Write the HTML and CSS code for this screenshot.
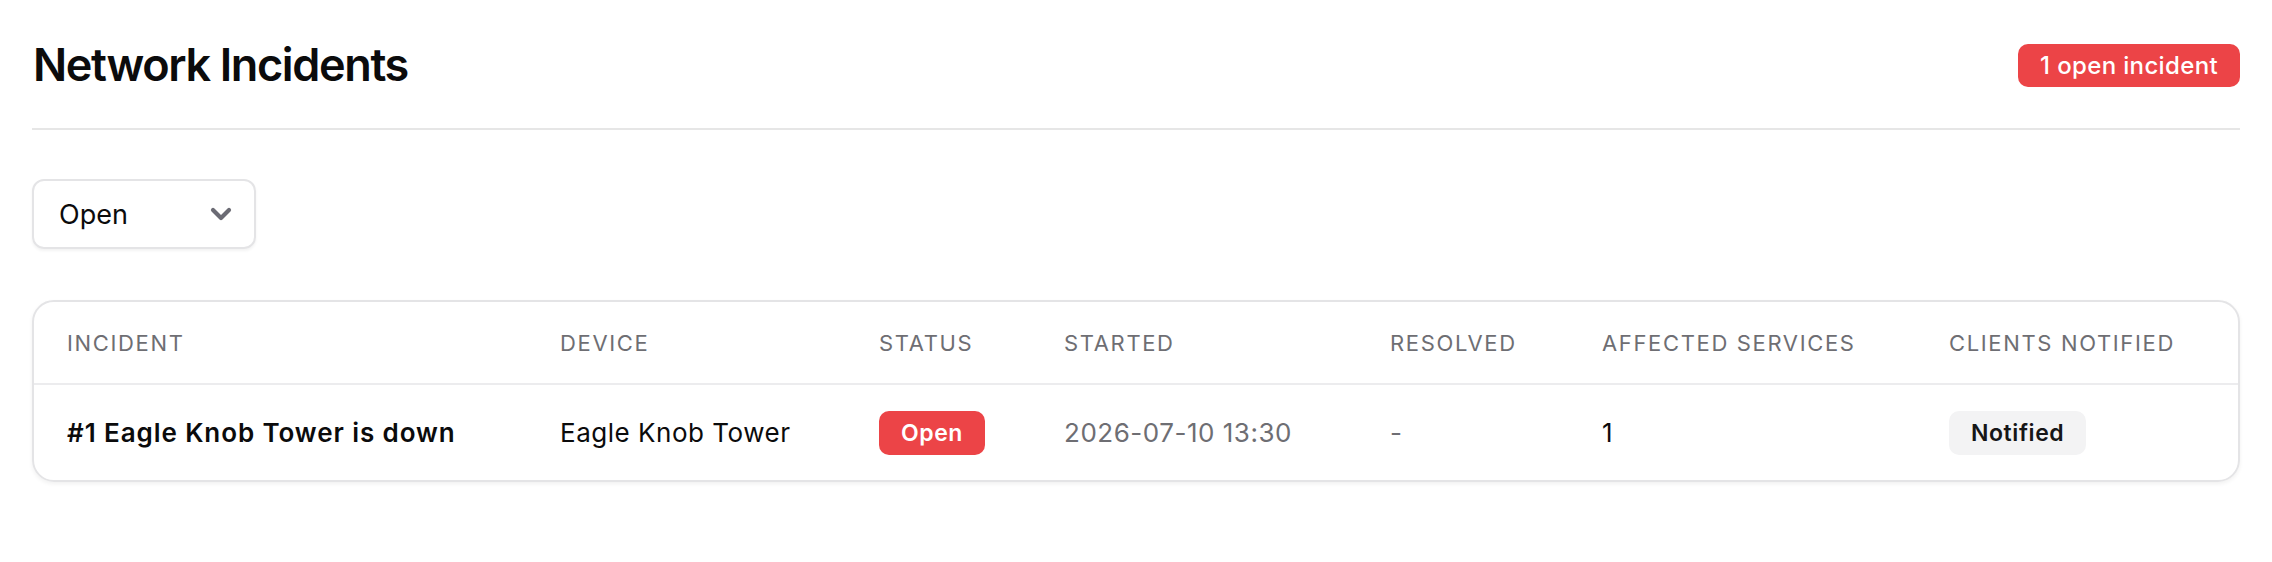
FILE: index.html
```html
<!DOCTYPE html>
<html lang="en">
<head>
    <meta charset="UTF-8">
    <meta name="viewport" content="width=device-width, initial-scale=1.0">
    <title>Network Incidents</title>
    <link rel="stylesheet" href="styles.css">
</head>
<body>
    <div class="page">
        <!-- Cabeçalho -->
        <header class="top">
            <h1>Network Incidents</h1>
            <span class="count">1 open incident</span>
        </header>

        <!-- Filtro -->
        <div class="filter">
            <span>Open</span>
            <svg class="chevron" width="22" height="14" viewBox="0 0 22 14">
                <path d="M3 3 L11 11 L19 3" fill="none" stroke="#6b6b74" stroke-width="4.2" stroke-linecap="round" stroke-linejoin="round"/>
            </svg>
        </div>

        <!-- Tabela -->
        <div class="card">
            <table>
                <thead>
                    <tr>
                        <th class="c-incident">Incident</th>
                        <th class="c-device">Device</th>
                        <th class="c-status">Status</th>
                        <th class="c-started">Started</th>
                        <th class="c-resolved">Resolved</th>
                        <th class="c-services">Affected Services</th>
                        <th class="c-clients">Clients Notified</th>
                    </tr>
                </thead>
                <tbody>
                    <tr>
                        <td class="name">#1 Eagle Knob Tower is down</td>
                        <td>Eagle Knob Tower</td>
                        <td><span class="pill pill-open">Open</span></td>
                        <td class="muted">2026-07-10 13:30</td>
                        <td class="muted">-</td>
                        <td>1</td>
                        <td><span class="pill pill-grey">Notified</span></td>
                    </tr>
                </tbody>
            </table>
        </div>
    </div>
</body>
</html>
```

FILE: styles.css
```css
body {
    margin: 0;
    font-family: Inter, "Noto Sans", sans-serif;
    background-color: #ffffff;
    color: #0b0b0c;
}
.page {
    padding: 36px 32px 32px;
}
.top {
    display: flex;
    justify-content: space-between;
    align-items: center;
    padding-bottom: 34px;
    border-bottom: 2px solid #e6e6e6;
}
h1 {
    margin: 0 0 0 1px;
    font-size: 45px;
    line-height: 58px;
    font-weight: 600;
    letter-spacing: -0.03em;
}
.count {
    background-color: #ec4447;
    color: #fff;
    font-size: 24px;
    font-weight: 500;
    letter-spacing: 0.015em;
    height: 43px;
    line-height: 43px;
    padding: 0 22px;
    border-radius: 10px;
}

/* Filtro */
.filter {
    margin-top: 49px;
    width: 224px;
    height: 70px;
    box-sizing: border-box;
    display: flex;
    align-items: center;
    justify-content: space-between;
    padding: 0 22px 0 25px;
    border: 2px solid #e4e4e6;
    border-radius: 12px;
    box-shadow: 0 2px 3px rgba(0, 0, 0, 0.05);
    font-size: 27px;
}

/* Tabela */
.card {
    margin-top: 51px;
    border: 2px solid #e4e4e6;
    border-radius: 22px;
    box-shadow: 0 2px 4px rgba(0, 0, 0, 0.06);
    overflow: hidden;
}
table {
    width: 100%;
    border-collapse: collapse;
    table-layout: fixed;
}
th {
    height: 81px;
    padding: 0 33px;
    text-align: left;
    font-size: 22px;
    font-weight: 400;
    letter-spacing: 0.075em;
    text-transform: uppercase;
    color: #6e6e73;
    border-bottom: 2px solid #ececee;
    white-space: nowrap;
}
td {
    height: 95px;
    padding: 0 33px;
    font-size: 26px;
    letter-spacing: 0.02em;
    white-space: nowrap;
}
.c-incident { width: 427px; }
.c-device { width: 253px; }
.c-status { width: 119px; }
.c-started { width: 260px; }
.c-resolved { width: 146px; }
.c-services { width: 281px; }
.name {
    font-weight: 600;
    letter-spacing: 0.035em;
}
.muted {
    color: #6e6e73;
}
.pill {
    display: inline-block;
    height: 44px;
    line-height: 44px;
    padding: 0 22px;
    border-radius: 10px;
    font-size: 23px;
    font-weight: 600;
    letter-spacing: 0.025em;
}
.pill-open {
    background-color: #ec4447;
    color: #fff;
}
.pill-grey {
    background-color: #f3f3f4;
    color: #161617;
}
```
